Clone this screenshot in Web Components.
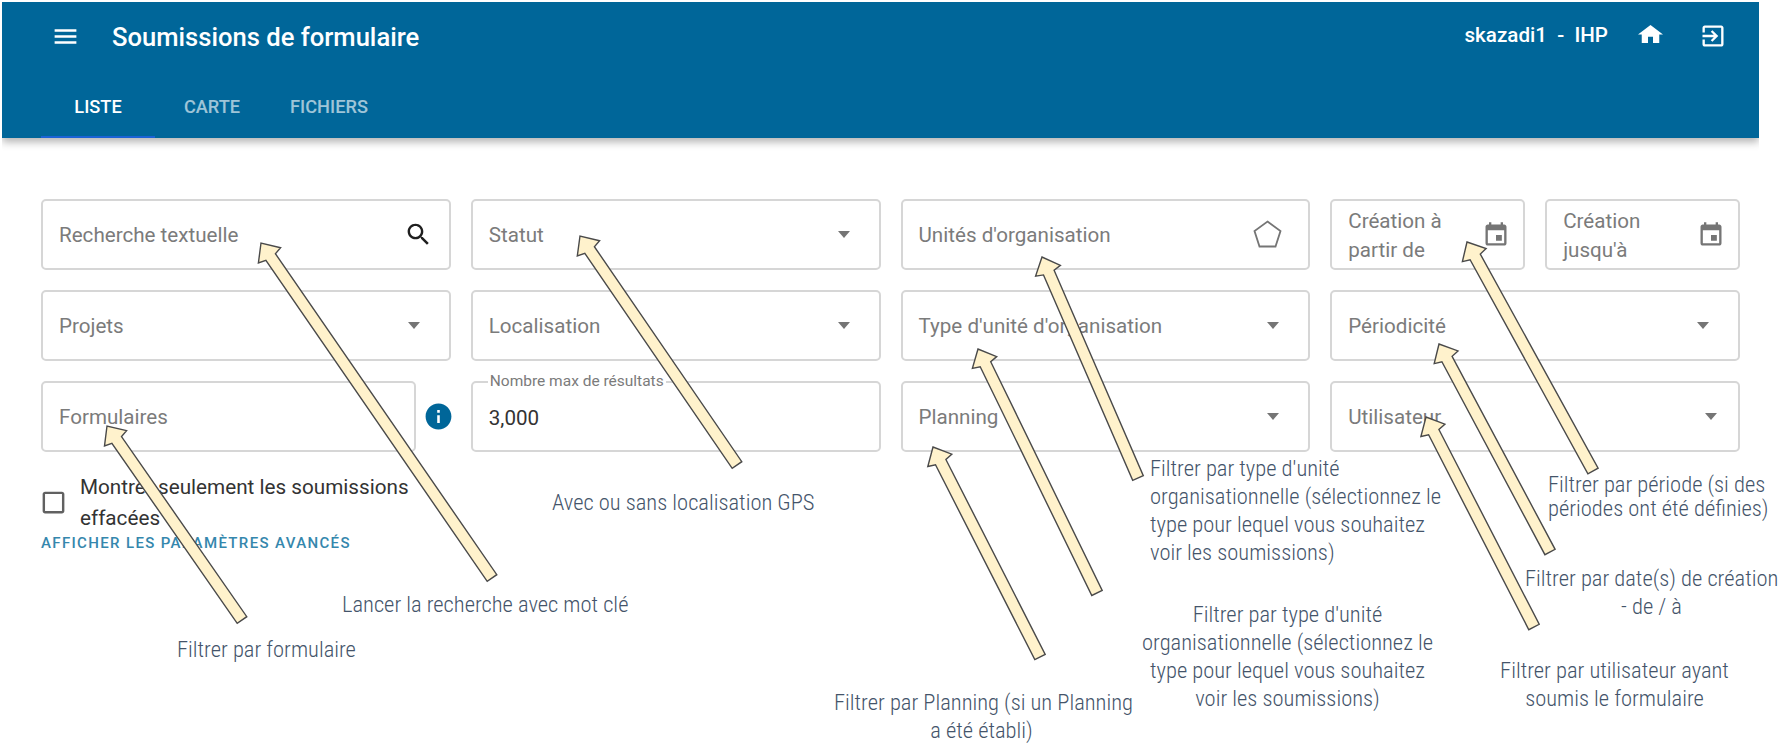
<!DOCTYPE html>
<html lang="fr">
<head>
<meta charset="utf-8">
<title>Soumissions de formulaire</title>
<style>
  html, body { margin:0; background:#fff; }
  body { width:1787px; height:746px; overflow:hidden; position:relative; font-family:Roboto,"Liberation Sans",sans-serif; }
</style>
</head>
<body>
<app-header></app-header>
<filter-panel>
  <filter-field label="Recherche textuelle" icon="search"></filter-field>
  <filter-field label="Statut" icon="drop"></filter-field>
  <filter-field label="Unités d'organisation" icon="pentagon"></filter-field>
  <date-pair></date-pair>
  <filter-field label="Projets" icon="drop"></filter-field>
  <filter-field label="Localisation" icon="drop"></filter-field>
  <filter-field label="Type d'unité d'organisation" icon="drop"></filter-field>
  <filter-field label="Périodicité" icon="drop"></filter-field>
  <form-field></form-field>
  <filter-field legend="Nombre max de résultats" value="3,000"></filter-field>
  <filter-field label="Planning" icon="drop"></filter-field>
  <filter-field wide label="Utilisateur" icon="drop"></filter-field>
</filter-panel>
<filter-extras></filter-extras>

<anno-note style="left:177px;top:635px">Filtrer par formulaire</anno-note>
<anno-note style="left:342px;top:590px">Lancer la recherche avec mot clé</anno-note>
<anno-note style="left:552px;top:488px">Avec ou sans localisation GPS</anno-note>
<anno-note center style="left:834px;top:688px;width:295px">Filtrer par Planning (si un Planning<br>a été établi)</anno-note>
<anno-note style="left:1150px;top:454px">Filtrer par type d'unité<br>organisationnelle (sélectionnez le<br>type pour lequel vous souhaitez<br>voir les soumissions)</anno-note>
<anno-note center style="left:1142px;top:600px;width:291px">Filtrer par type d'unité<br>organisationnelle (sélectionnez le<br>type pour lequel vous souhaitez<br>voir les soumissions)</anno-note>
<anno-note style="left:1548px;top:472px;line-height:24px">Filtrer par période (si des<br>périodes ont été définies)</anno-note>
<anno-note center style="left:1525px;top:564px;width:253px">Filtrer par date(s) de création<br>- de / à</anno-note>
<anno-note center style="left:1499px;top:656px;width:231px">Filtrer par utilisateur ayant<br>soumis le formulaire</anno-note>

<anno-arrow tip="107,426" tail="242,620"></anno-arrow>
<anno-arrow tip="261,243" tail="492,578"></anno-arrow>
<anno-arrow tip="580,236" tail="737,465"></anno-arrow>
<anno-arrow tip="1042,257" tail="1138,478"></anno-arrow>
<anno-arrow tip="978,349" tail="1097,593"></anno-arrow>
<anno-arrow tip="933,447" tail="1040,657"></anno-arrow>
<anno-arrow tip="1467,242" tail="1593,471"></anno-arrow>
<anno-arrow tip="1439,344" tail="1550,552"></anno-arrow>
<anno-arrow tip="1426,417" tail="1534,627"></anno-arrow>

<script>
const ICONS = {
  menu: "M3 18h18v-2H3v2zm0-5h18v-2H3v2zm0-7v2h18V6H3z",
  search: "M15.5 14h-.79l-.28-.27C15.41 12.59 16 11.11 16 9.5 16 5.91 13.09 3 9.5 3S3 5.91 3 9.5 5.91 16 9.5 16c1.61 0 3.09-.59 4.23-1.57l.27.28v.79l5 4.99L20.49 19l-4.99-5zm-6 0C7.01 14 5 11.99 5 9.5S7.01 5 9.5 5 14 7.01 14 9.5 11.99 14 9.5 14z",
  event: "M17 12h-5v5h5v-5zM16 1v2H8V1H6v2H5c-1.11 0-1.99.9-1.99 2L3 19c0 1.1.89 2 2 2h14c1.1 0 2-.9 2-2V5c0-1.1-.9-2-2-2h-1V1h-2zm3 18H5V8h14v11z",
  home: "M10 20v-6h4v6h5v-8h3L12 3 2 12h3v8z",
  exit: "M10.09 15.59L11.5 17l5-5-5-5-1.41 1.41L12.67 11H3v2h9.67l-2.58 2.59zM19 3H5c-1.11 0-2 .9-2 2v4h2V5h14v14H5v-4H3v4c0 1.1.89 2 2 2h14c1.1 0 2-.9 2-2V5c0-1.1-.9-2-2-2z",
  info: "M12 2C6.48 2 2 6.48 2 12s4.48 10 10 10 10-4.48 10-10S17.52 2 12 2zm1 15h-2v-6h2v6zm0-8h-2V7h2v2z",
  box: "M19 5v14H5V5h14m0-2H5c-1.1 0-2 .9-2 2v14c0 1.1.9 2 2 2h14c1.1 0 2-.9 2-2V5c0-1.1-.9-2-2-2z",
};
const svgIcon = (name, size, color) =>
  `<svg width="${size}" height="${size}" viewBox="0 0 24 24" fill="${color}"><path d="${ICONS[name]}"/></svg>`;

class AppHeader extends HTMLElement {
  constructor() {
    super();
    this._s = this.attachShadow({ mode: "open" });
  }
  connectedCallback() {
    this._s.innerHTML = `
      <style>
        :host { display:block; margin:2px 0 0 2px; width:1757px; height:136px; background:#006699; color:#fff;
          box-shadow:0 4px 8px rgba(0,0,0,.3); clip-path:inset(0 0 -20px 0); font-family:Roboto,sans-serif; }
        .top { display:flex; align-items:center; height:68px; padding:0 32px 0 49px; box-sizing:border-box; }
        .top svg { display:block; flex:none; }
        h1 { margin:0 0 0 32px; font-size:25.6px; font-weight:500; flex:1; padding-top:1px; }
        .user { font-size:20.6px; font-weight:500; white-space:pre; margin:-3px 30px 0 0; }
        .home { margin:-5px 36px 0 0; }
        .tabs { display:flex; padding-left:39px; height:68px; }
        .tab { height:68px; box-sizing:border-box; width:114px; display:flex; align-items:center; justify-content:center;
          font-size:18.2px; font-weight:500; opacity:.62; padding-top:4px; }
        .tab.on { opacity:1; padding-top:6px; border-bottom:2px solid #1a63d6; }
        .tab.w { width:120px; }
      </style>
      <div class="top">
        ${svgIcon("menu", 29, "#fff")}
        <h1>Soumissions de formulaire</h1>
        <span class="user">skazadi1  -  IHP</span>
        <svg class="home" width="25" height="18" viewBox="2 3 20 17" preserveAspectRatio="none" fill="#fff"><path d="${ICONS.home}"/></svg>
        ${svgIcon("exit", 28, "#fff")}
      </div>
      <div class="tabs">
        <div class="tab on">LISTE</div>
        <div class="tab">CARTE</div>
        <div class="tab w">FICHIERS</div>
      </div>`;
  }
}
customElements.define("app-header", AppHeader);

class FilterPanel extends HTMLElement {
  constructor() {
    super();
    this.attachShadow({ mode: "open" }).innerHTML = `
      <style>
        :host { display:grid; grid-template-columns:repeat(4, 1fr); gap:20px; margin:61px 0 0 41px; width:1699px; }
      </style>
      <slot></slot>`;
  }
}
customElements.define("filter-panel", FilterPanel);

class FilterField extends HTMLElement {
  constructor() {
    super();
    this._s = this.attachShadow({ mode: "open" });
  }
  connectedCallback() {
    const label = this.getAttribute("label") || "";
    const legend = this.getAttribute("legend");
    const value = this.getAttribute("value");
    const icon = this.getAttribute("icon");
    let right = "";
    if (icon === "drop") right = `<span class="tri"></span>`;
    else if (icon === "pentagon")
      right = `<svg class="pent" width="29" height="28" viewBox="0 0 29 28" fill="none" stroke="#757575" stroke-width="1.8"><path d="M14.5 1.5 27.5 11 22.5 26.5H6.5L1.5 11z"/></svg>`;
    else if (icon === "search") right = svgIcon("search", 29, "#1f1f1f");
    else if (icon === "event") right = svgIcon("event", 28, "#757575");
    this._s.innerHTML = `
      <style>
        :host { display:flex; align-items:center; position:relative; height:71px; box-sizing:border-box; min-width:0;
          border:2px solid #d6d6d6; border-radius:5px; padding:0 16px 0 16px; font-family:Roboto,sans-serif; font-size:20.6px; }
        :host([narrow]) { padding-right:13px; }
        :host([wide]) { padding-right:8px; }
        .txt { flex:1; color:#7b7b7b; line-height:29px; margin-top:2px; }
        .val { flex:1; color:#333; margin-top:2px; }
        .tri { width:0; height:0; border:6.5px solid transparent; border-top:7px solid #757575; border-bottom:0; margin-right:13px; }
        .pent { margin-right:10px; margin-top:-2px; }
        svg { flex:none; display:block; }
        .leg { position:absolute; left:15px; top:-10px; padding:0 2px; background:#fff; color:#7b7b7b; font-size:15.5px; line-height:16px; }
      </style>
      ${legend ? `<span class="leg">${legend}</span>` : ""}
      ${value ? `<span class="val">${value}</span>` : `<span class="txt">${label}</span>`}
      ${right}`;
  }
}
customElements.define("filter-field", FilterField);

class DatePair extends HTMLElement {
  constructor() {
    super();
    this.attachShadow({ mode: "open" }).innerHTML = `
      <style>
        :host { display:grid; grid-template-columns:1fr 1fr; gap:20px; min-width:0; }
      </style>
      <filter-field narrow label="Création à partir de" icon="event"></filter-field>
      <filter-field narrow label="Création jusqu'à" icon="event"></filter-field>`;
  }
}
customElements.define("date-pair", DatePair);

class FormField extends HTMLElement {
  constructor() {
    super();
    this.attachShadow({ mode: "open" }).innerHTML = `
      <style>
        :host { display:flex; align-items:center; gap:7px; min-width:0; }
        filter-field { flex:1; }
        svg { flex:none; display:block; margin-right:-3px; }
      </style>
      <filter-field label="Formulaires"></filter-field>
      ${svgIcon("info", 31, "#006699")}`;
  }
}
customElements.define("form-field", FormField);

class FilterExtras extends HTMLElement {
  constructor() {
    super();
    this.attachShadow({ mode: "open" }).innerHTML = `
      <style>
        :host { display:block; margin:20px 0 0 41px; width:380px; font-family:Roboto,sans-serif; }
        .chk { display:flex; align-items:center; gap:12px; font-size:20.7px; line-height:31px; color:#333; }
        .chk svg { flex:none; margin-left:-2px; margin-top:-2px; }
        a { display:block; color:#3587ad; font-size:15px; font-weight:500; letter-spacing:1.35px; line-height:18px; margin-top:0; }
      </style>
      <div class="chk">${svgIcon("box", 29, "#616161")}<span>Montrer seulement les soumissions effacées</span></div>
      <a>AFFICHER LES PARAMÈTRES AVANCÉS</a>`;
  }
}
customElements.define("filter-extras", FilterExtras);

class AnnoNote extends HTMLElement {
  constructor() {
    super();
    this.attachShadow({ mode: "open" }).innerHTML = `
      <style>
        :host { position:absolute; white-space:nowrap; font-family:Roboto,sans-serif; font-size:22.5px; font-weight:300;
          font-stretch:75%; line-height:28px; color:#44546a; }
        :host([center]) { text-align:center; }
      </style>
      <slot></slot>`;
  }
}
customElements.define("anno-note", AnnoNote);

class AnnoArrow extends HTMLElement {
  constructor() {
    super();
    this._s = this.attachShadow({ mode: "open" });
  }
  connectedCallback() {
    const [tx, ty] = this.getAttribute("tip").split(",").map(Number);
    const [ex, ey] = this.getAttribute("tail").split(",").map(Number);
    const len = Math.hypot(ex - tx, ey - ty);
    const dx = (ex - tx) / len, dy = (ey - ty) / len;
    const nx = -dy, ny = dx;
    const hl = 15, hw = 13.5, sw = 5.8, neck = 17;
    const pts = [
      [tx, ty],
      [tx + dx * hl + nx * hw, ty + dy * hl + ny * hw],
      [tx + dx * neck + nx * sw, ty + dy * neck + ny * sw],
      [ex + nx * sw, ey + ny * sw],
      [ex - nx * sw, ey - ny * sw],
      [tx + dx * neck - nx * sw, ty + dy * neck - ny * sw],
      [tx + dx * hl - nx * hw, ty + dy * hl - ny * hw],
    ].map((p) => p.map((v) => v.toFixed(1)).join(",")).join(" ");
    this._s.innerHTML = `
      <style>
        :host { position:absolute; left:0; top:0; width:1787px; height:746px; pointer-events:none; }
        svg { display:block; }
      </style>
      <svg width="1787" height="746"><polygon points="${pts}" fill="#fff2cc" stroke="#4a4a4a" stroke-width="1.4" stroke-linejoin="miter"/></svg>`;
  }
}
customElements.define("anno-arrow", AnnoArrow);
</script>
</body>
</html>
